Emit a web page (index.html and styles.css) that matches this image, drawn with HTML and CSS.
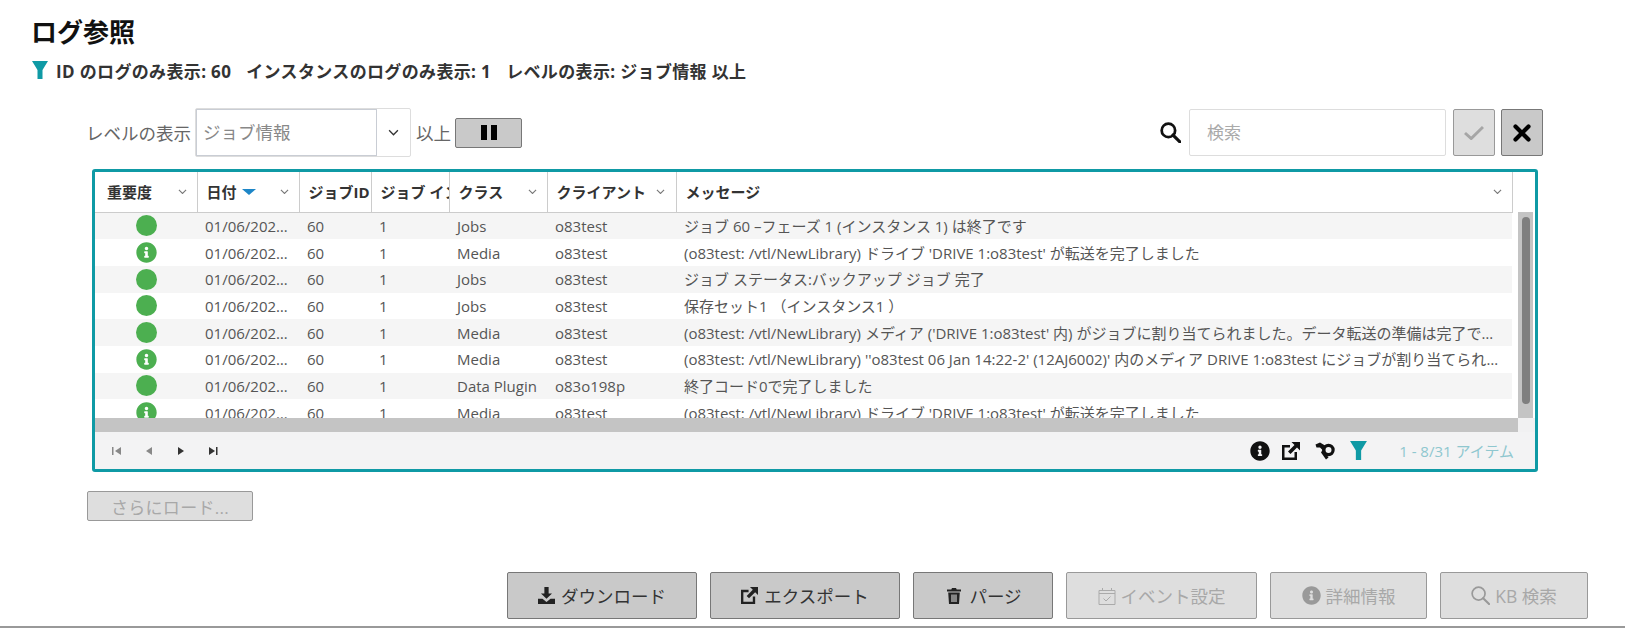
FILE: index.html
```html
<!DOCTYPE html>
<html lang="ja">
<head>
<meta charset="utf-8">
<title>ログ参照</title>
<link rel="stylesheet" href="styles.css">
</head>
<body>
<svg class="defs" width="0" height="0" aria-hidden="true">
  <defs>
    <symbol id="i-info" viewBox="0 0 512 512"><path d="M256 8C119.043 8 8 119.083 8 256c0 136.997 111.043 248 248 248s248-111.003 248-248C504 119.083 392.957 8 256 8zm0 110c23.196 0 42 18.804 42 42s-18.804 42-42 42-42-18.804-42-42 18.804-42 42-42zm56 254c0 6.627-5.373 12-12 12h-88c-6.627 0-12-5.373-12-12v-24c0-6.627 5.373-12 12-12h12v-64h-12c-6.627 0-12-5.373-12-12v-24c0-6.627 5.373-12 12-12h64c6.627 0 12 5.373 12 12v100h12c6.627 0 12 5.373 12 12v24z"/></symbol>
    <symbol id="i-funnel" viewBox="0 0 16 18"><path d="M0 0h16L10.500 9v9h-5V9z"/></symbol>
    <symbol id="i-ext" viewBox="0 0 18 18"><path d="M0 3h8v2.500H2.500v10h10V10H15v8H0z"/><path d="M9.500 0H18v8.500l-3-3L8.500 12 6 9.500 12.500 3z"/></symbol>
    <symbol id="i-tools" viewBox="0 0 20 18"><circle cx="13.500" cy="8" r="4.600" fill="none" stroke="currentColor" stroke-width="3.200"/><path d="M0.500 2.500 5 0.500l5 3-2 5-3-3-3.500 0z"/><path d="M8 7l5.500 8.500-2.500 2L6 10.500z"/></symbol>
    <symbol id="i-search" viewBox="0 0 20 20"><circle cx="8" cy="8" r="6.400" fill="none" stroke="currentColor" stroke-width="2.600"/><path d="M12.400 12.400 19 19" fill="none" stroke="currentColor" stroke-width="3" stroke-linecap="round"/></symbol>
    <symbol id="i-search-thin" viewBox="0 0 20 20"><circle cx="8" cy="8" r="6.800" fill="none" stroke="currentColor" stroke-width="1.800"/><path d="M12.800 12.800 19 19" fill="none" stroke="currentColor" stroke-width="2.200" stroke-linecap="round"/></symbol>
    <symbol id="i-download" viewBox="0 0 16 16"><path d="M6 0h4v6h3.200L8 11 2.800 6H6z"/><path d="M0 11h4.200L8 14l3.800-3H16v5H0z"/></symbol>
    <symbol id="i-trash" viewBox="0 0 14 16"><path d="M5 0h4l.7 1.500H14v2H0v-2h4.300zM1.200 4.500h11.600L12 16H2zM4.400 6.500v7.500h1.200V6.500zm2 0v7.500h1.200V6.500zm2 0v7.500h1.200V6.500z"/></symbol>
    <symbol id="i-cal" viewBox="0 0 18 18"><path d="M1 3.500h16v14H1zM1 6.500h16M4.500 1v3M13.500 1v3M5.500 11.500l2.500 2.500 4.500-4.500" fill="none" stroke="currentColor" stroke-width="1"/></symbol>
    <symbol id="i-check" viewBox="0 0 20 15"><path d="M1 8l6.200 5.500L19 2" fill="none" stroke="currentColor" stroke-width="3"/></symbol>
    <symbol id="i-x" viewBox="0 0 18 18"><path d="M2.500 2.500l13 13M15.500 2.500l-13 13" fill="none" stroke="currentColor" stroke-width="4.200" stroke-linecap="round"/></symbol>
    <symbol id="i-chev" viewBox="0 0 10 6"><path d="M1 1l4 4 4-4" fill="none" stroke="currentColor" stroke-width="1.200"/></symbol>
  </defs>
</svg>

<main class="page">
  <h1 class="title">ログ参照</h1>
  <p class="filters">
    <svg class="filters-icon"><use href="#i-funnel"/></svg>
    <span>ID のログのみ表示: 60</span>
    <span>インスタンスのログのみ表示: 1</span>
    <span>レベルの表示: ジョブ情報 以上</span>
  </p>

  <div class="toolbar">
    <div class="toolbar-group">
      <span class="tool-label">レベルの表示</span>
      <div class="select">
        <span class="select-value">ジョブ情報</span>
        <span class="select-arrow"><svg class="chev-dark"><use href="#i-chev"/></svg></span>
      </div>
      <span class="tool-label tool-label-above">以上</span>
      <button class="btn pause" type="button" aria-label="一時停止"><i></i><i></i></button>
    </div>
    <div class="toolbar-group">
      <svg class="search-icon"><use href="#i-search"/></svg>
      <div class="search-input">検索</div>
      <button class="btn square disabled" type="button" aria-label="適用"><svg class="check-icon"><use href="#i-check"/></svg></button>
      <button class="btn square" type="button" aria-label="クリア"><svg class="x-icon"><use href="#i-x"/></svg></button>
    </div>
  </div>

  <section class="grid">
    <div class="grid-main">
      <div class="grid-view">
        <table class="table">
          <colgroup>
            <col class="c-sev"><col class="c-date"><col class="c-job"><col class="c-inst"><col class="c-class"><col class="c-client"><col class="c-msg">
          </colgroup>
          <thead>
            <tr>
              <th class="th-first"><div class="th"><span>重要度</span><svg class="chev"><use href="#i-chev"/></svg></div></th>
              <th><div class="th"><span>日付<i class="sort"></i></span><svg class="chev"><use href="#i-chev"/></svg></div></th>
              <th><div class="th th-clip"><span>ジョブID</span></div></th>
              <th><div class="th th-clip"><span>ジョブ インスタンス</span></div></th>
              <th><div class="th"><span>クラス</span><svg class="chev"><use href="#i-chev"/></svg></div></th>
              <th class="th-client"><div class="th"><span>クライアント</span><svg class="chev"><use href="#i-chev"/></svg></div></th>
              <th><div class="th"><span>メッセージ</span><svg class="chev"><use href="#i-chev"/></svg></div></th>
            </tr>
          </thead>
        </table>
        <div class="rows">
          <table class="table">
            <colgroup>
              <col class="c-sev"><col class="c-date"><col class="c-job"><col class="c-inst"><col class="c-class"><col class="c-client"><col class="c-msg">
            </colgroup>
            <tbody>
              <tr><td class="sev"><i class="dot"></i></td><td>01/06/2021 14:25:11</td><td>60</td><td>1</td><td>Jobs</td><td>o83test</td><td>ジョブ 60 –フェーズ 1 (インスタンス 1) は終了です</td></tr>
              <tr><td class="sev"><svg class="sev-info"><use href="#i-info"/></svg></td><td>01/06/2021 14:25:11</td><td>60</td><td>1</td><td>Media</td><td>o83test</td><td>(o83test: /vtl/NewLibrary) ドライブ 'DRIVE 1:o83test' が転送を完了しました</td></tr>
              <tr><td class="sev"><i class="dot"></i></td><td>01/06/2021 14:25:10</td><td>60</td><td>1</td><td>Jobs</td><td>o83test</td><td>ジョブ ステータス:バックアップ ジョブ 完了</td></tr>
              <tr><td class="sev"><i class="dot"></i></td><td>01/06/2021 14:25:10</td><td>60</td><td>1</td><td>Jobs</td><td>o83test</td><td>保存セット1 （インスタンス1 ）</td></tr>
              <tr><td class="sev"><i class="dot"></i></td><td>01/06/2021 14:25:09</td><td>60</td><td>1</td><td>Media</td><td>o83test</td><td>(o83test: /vtl/NewLibrary) メディア ('DRIVE 1:o83test' 内) がジョブに割り当てられました。データ転送の準備は完了です。ジョブを開始します</td></tr>
              <tr><td class="sev"><svg class="sev-info"><use href="#i-info"/></svg></td><td>01/06/2021 14:25:09</td><td>60</td><td>1</td><td>Media</td><td>o83test</td><td>(o83test: /vtl/NewLibrary) ''o83test 06 Jan 14:22-2' (12AJ6002)' 内のメディア DRIVE 1:o83test にジョブが割り当てられました</td></tr>
              <tr><td class="sev"><i class="dot"></i></td><td>01/06/2021 14:25:08</td><td>60</td><td>1</td><td>Data Plugin</td><td>o83o198p</td><td>終了コード0で完了しました</td></tr>
              <tr><td class="sev"><svg class="sev-info"><use href="#i-info"/></svg></td><td>01/06/2021 14:25:08</td><td>60</td><td>1</td><td>Media</td><td>o83test</td><td>(o83test: /vtl/NewLibrary) ドライブ 'DRIVE 1:o83test' が転送を完了しました</td></tr>
            </tbody>
          </table>
        </div>
      </div>
      <div class="vscroll"><div class="vthumb"></div></div>
    </div>
    <div class="hscroll"><div class="hbar"></div><div class="corner"></div></div>
    <footer class="pager">
      <div class="pager-nav">
        <svg class="nav" viewBox="0 0 10 10"><path class="dim" d="M0 1h1.500v8H0zM9 1v8L3 5z"/></svg>
        <svg class="nav" viewBox="0 0 10 10"><path class="dim" d="M8 1v8L2 5z"/></svg>
        <svg class="nav" viewBox="0 0 10 10"><path d="M2 1v8l6-4z"/></svg>
        <svg class="nav" viewBox="0 0 10 10"><path d="M1 1v8l6-4zM8 1h1.500v8H8z"/></svg>
      </div>
      <div class="pager-tools">
        <svg class="p-info"><use href="#i-info"/></svg>
        <svg class="p-ext"><use href="#i-ext"/></svg>
        <svg class="p-tools"><use href="#i-tools"/></svg>
        <svg class="p-funnel"><use href="#i-funnel"/></svg>
        <span class="count">1 - 8/31 アイテム</span>
      </div>
    </footer>
  </section>

  <button class="btn load-more disabled" type="button">さらにロード...</button>

  <div class="actions">
    <button class="btn action a-download" type="button"><svg class="a-icon"><use href="#i-download"/></svg>ダウンロード</button>
    <button class="btn action a-export" type="button"><svg class="a-icon"><use href="#i-ext"/></svg>エクスポート</button>
    <button class="btn action a-purge" type="button"><svg class="a-icon a-trash"><use href="#i-trash"/></svg>パージ</button>
    <button class="btn action a-event disabled" type="button"><svg class="a-icon a-cal"><use href="#i-cal"/></svg>イベント設定</button>
    <button class="btn action a-detail disabled" type="button"><svg class="a-icon a-round"><use href="#i-info"/></svg>詳細情報</button>
    <button class="btn action a-kb disabled" type="button"><svg class="a-icon a-round"><use href="#i-search-thin"/></svg>KB 検索</button>
  </div>
</main>
</body>
</html>
```
FILE: styles.css
```css
* { box-sizing: border-box; }
html, body { margin: 0; padding: 0; }
body {
  width: 1625px;
  height: 628px;
  overflow: hidden;
  background: #fff;
  color: #555;
  font-family: "Open Sans", "Noto Sans CJK JP", sans-serif;
  font-size: 15px;
}
.defs { position: absolute; }
svg { fill: currentColor; display: block; flex: none; }
.page {
  height: 628px;
  border-bottom: 2px solid #999;
  display: flex;
  flex-direction: column;
  overflow: hidden;
}
.title {
  margin: 13px 0 0 31px;
  font-size: 26px;
  line-height: 38px;
  font-weight: 700;
  color: #111;
}
.filters {
  margin: 9px 0 0 32px;
  height: 20px;
  display: flex;
  align-items: center;
  gap: 15px;
  font-size: 17px;
  letter-spacing: 0.35px;
  font-weight: 700;
  color: #333;
}
.filters-icon { width: 16px; height: 18px; color: #0f9aa5; margin-right: -7px; }

.toolbar {
  margin: 28px 82px 0 86px;
  height: 49px;
  display: flex;
  justify-content: space-between;
  align-items: center;
}
.toolbar-group { display: flex; align-items: center; }
.tool-label { font-size: 17.500px; color: #666; margin-right: 4px; white-space: nowrap; }
.tool-label-above { margin-left: 5px; }
.select {
  width: 216px;
  height: 49px;
  display: flex;
  border: 1px solid #ddd;
  border-radius: 2px;
}
.select-value {
  width: 181px;
  border: 1px solid #c9cdd4;
  padding-left: 6px;
  line-height: 45px;
  font-size: 17.500px;
  color: #888;
}
.select-arrow { flex: 1; display: flex; align-items: center; justify-content: center; }
.chev-dark { width: 11px; height: 7px; color: #333; }

.btn {
  font-family: inherit;
  background: #c9c9c9;
  border: 1px solid #777;
  border-radius: 2px;
  color: #333;
  padding: 0;
}
.btn.disabled { background: #dedede; border-color: #999; color: #a8a8a8; }
.pause {
  width: 67px;
  height: 30px;
  display: flex;
  align-items: center;
  justify-content: center;
  gap: 4px;
}
.pause i { display: block; width: 6px; height: 15px; background: #000; }

.search-icon { width: 21px; height: 21px; color: #111; margin-right: 8px; }
.search-input {
  width: 257px;
  height: 47px;
  border: 1px solid #ddd;
  border-radius: 2px;
  padding-left: 17px;
  line-height: 45px;
  font-size: 17px;
  color: #aaa;
  margin-right: 7px;
}
.square {
  width: 42px;
  height: 47px;
  display: flex;
  align-items: center;
  justify-content: center;
  margin-right: 6px;
}
.square:last-child { margin-right: 0; }
.check-icon { width: 20px; height: 15px; color: #a6a6a6; }
.x-icon { width: 18px; height: 18px; color: #000; }

.grid {
  margin: 12px 87px 0 92px;
  height: 303px;
  border: 3px solid #0f9aa5;
  border-radius: 3px;
  display: flex;
  flex-direction: column;
  flex: none;
}
.grid-main { height: 246px; display: flex; }
.grid-view { width: 1423px; overflow: hidden; }
.table { width: 1417px; table-layout: fixed; border-collapse: collapse; }
.c-sev { width: 102px; }
.c-date { width: 102px; }
.c-job { width: 72px; }
.c-inst { width: 78px; }
.c-class { width: 98px; }
.c-client { width: 129px; }
.c-msg { width: 836px; }
th { padding: 0; height: 40px; border-bottom: 1px solid #ccc; border-right: 1px solid #ccc; }
.th {
  height: 39px;
  display: flex;
  align-items: center;
  justify-content: space-between;
  padding: 0 7px 0 9px;
  font-size: 15px;
  font-weight: 700;
  color: #333;
  white-space: nowrap;
}
.th-first .th { padding-left: 12px; }
.th-clip { overflow: hidden; padding-right: 0; }
.th .chev { width: 9px; height: 5.400px; color: #777; margin-right: 3px; }
.th-client .th .chev { margin-right: 4px; }
.th span { display: flex; align-items: center; }
.sort {
  width: 0;
  height: 0;
  margin-left: 5px;
  border-left: 7.500px solid transparent;
  border-right: 7.500px solid transparent;
  border-top: 6px solid #1d86c7;
}
.rows { height: 206px; overflow: hidden; }
td {
  height: 26.700px;
  padding: 0 8px;
  white-space: nowrap;
  overflow: hidden;
  text-overflow: ellipsis;
  line-height: 18px;
  color: #555;
}
tbody tr:nth-child(odd) td { background: #f5f5f5; }
td.sev { padding: 0; }
.dot { display: block; width: 21px; height: 21px; margin: 0 auto; border-radius: 50%; background: #4caf50; }
.sev-info { width: 21px; height: 21px; margin: 0 auto; color: #4caf50; }

.vscroll { width: 15px; margin-top: 40px; background: #c4c4c4; padding: 5px 3.500px 14px; }
.vthumb { height: 100%; border-radius: 4px; background: #7f7f7f; }
.hscroll { height: 14px; display: flex; }
.hbar { flex: 1; background: #c4c4c4; }
.corner { width: 17px; background: #f1f1f2; }
.pager {
  flex: 1;
  background: #f3f3f4;
  display: flex;
  align-items: center;
  justify-content: space-between;
  padding: 0 21px 0 17px;
}
.pager-nav { display: flex; gap: 22px; }
.nav { width: 10px; height: 10px; color: #333; }
.nav .dim { fill: #888; }
.pager-tools { display: flex; align-items: center; color: #111; }
.p-info { width: 20px; height: 20px; margin-right: 12px; }
.p-ext { width: 18px; height: 18px; margin-right: 15px; }
.p-tools { width: 20px; height: 18px; margin-right: 15px; }
.p-funnel { width: 17px; height: 19px; color: #0f9aa5; margin-right: 32px; }
.count { color: #8fc7cf; font-size: 15px; }

.load-more {
  margin: 19px 0 0 87px;
  width: 166px;
  height: 30px;
  flex: none;
  font-size: 17px;
  letter-spacing: 0.3px;
}
.actions {
  margin: 51px 37px 0 0;
  display: flex;
  justify-content: flex-end;
  gap: 13px;
}
.action {
  height: 47px;
  font-size: 17.500px;
  display: flex;
  align-items: center;
  justify-content: center;
  gap: 5px;
}
.a-download { width: 190px; gap: 6px; }
.a-export { width: 190px; gap: 6px; }
.a-purge { width: 140px; gap: 8px; padding-left: 3px; }
.a-event { width: 191px; }
.a-detail { width: 157px; }
.a-kb { width: 148px; }
.a-icon { width: 17px; height: 17px; color: #222; }
.a-trash { width: 14px; height: 16px; }
.a-cal { width: 18px; height: 18px; color: #aaa; }
.a-round { width: 19px; height: 19px; color: #999; }
```
